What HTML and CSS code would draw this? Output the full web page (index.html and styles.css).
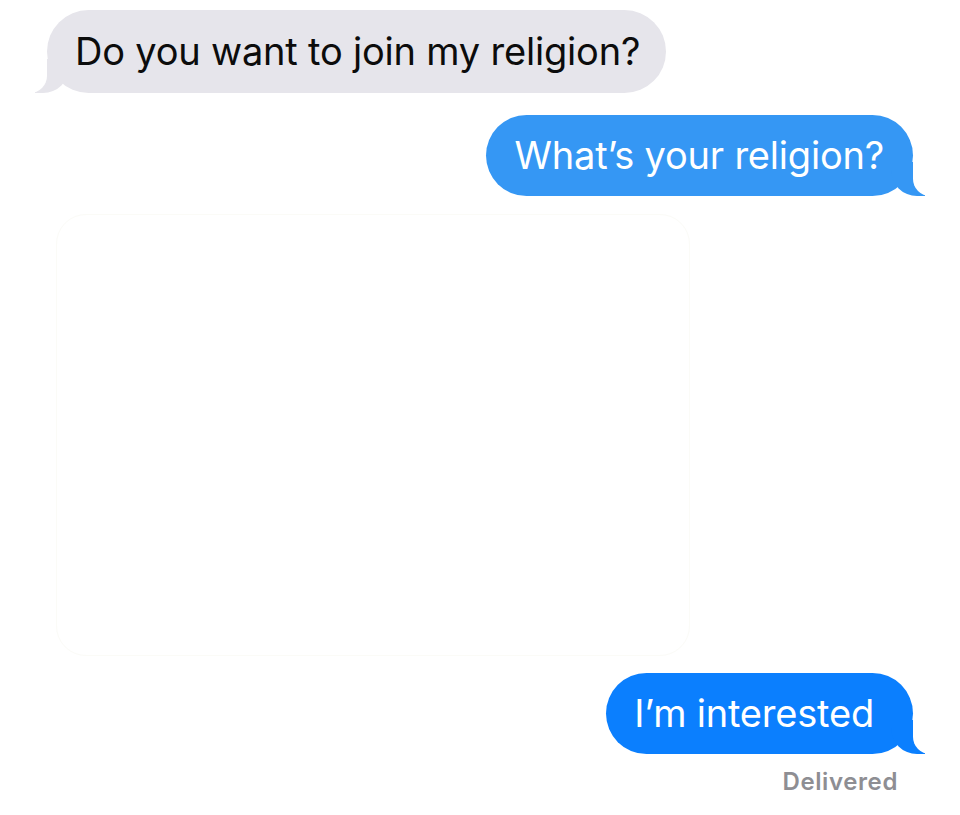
FILE: index.html
```html
<!DOCTYPE html>
<html>
<head>
<meta charset="utf-8">
<link rel="stylesheet" href="styles.css">
</head>
<body>
<main class="thread">
  <div class="row row-them">
    <div class="bubble them">Do you want to join my religion?</div>
  </div>
  <div class="row row-me">
    <div class="bubble me me-sms">What’s your religion?</div>
  </div>
  <div class="row row-them">
    <div class="photo"></div>
  </div>
  <div class="row row-me">
    <div class="bubble me me-imsg">I’m interested</div>
  </div>
  <div class="row row-me">
    <div class="status">Delivered</div>
  </div>
</main>
</body>
</html>
```
FILE: styles.css
```css
html, body {
  margin: 0;
  padding: 0;
  background: #ffffff;
}

.thread {
  width: 960px;
  height: 815px;
  box-sizing: border-box;
  padding-top: 10px;
  display: flex;
  flex-direction: column;
  font-family: Inter, "Noto Sans", Roboto, sans-serif;
}

.row {
  display: flex;
}

.row-them {
  justify-content: flex-start;
  padding-left: 47px;
}

.row-me {
  justify-content: flex-end;
  padding-right: 47px;
}

.bubble {
  position: relative;
  font-size: 38px;
  line-height: 45px;
  letter-spacing: -0.2px;
  border-radius: 42px;
  padding: 19px 26px 19px 28px;
  white-space: nowrap;
}

.them {
  background: #e6e5eb;
  color: #0c0c0c;
}

.me {
  color: #ffffff;
  padding-top: 18px;
  padding-bottom: 18px;
}

.me-sms {
  background: #3597f4;
  margin-top: 22px;
  padding-left: 29px;
  padding-right: 29px;
}

.me-imsg {
  background: #0b7ffe;
  margin-top: 17px;
  padding-left: 28px;
  padding-right: 39px;
}

/* tails */
.them::before {
  content: "";
  position: absolute;
  bottom: 0;
  left: -12px;
  width: 34px;
  height: 34px;
  background: #e6e5eb;
  border-bottom-right-radius: 26px;
}

.them::after {
  content: "";
  position: absolute;
  bottom: 0;
  left: -44px;
  width: 44px;
  height: 34px;
  background: #ffffff;
  border-bottom-right-radius: 17px;
}

.me::before {
  content: "";
  position: absolute;
  bottom: 0;
  right: -12px;
  width: 34px;
  height: 34px;
  border-bottom-left-radius: 26px;
}

.me-sms::before { background: #3597f4; }
.me-imsg::before { background: #0b7ffe; }

.me::after {
  content: "";
  position: absolute;
  bottom: 0;
  right: -44px;
  width: 44px;
  height: 34px;
  background: #ffffff;
  border-bottom-left-radius: 17px;
}

.photo {
  width: 632px;
  height: 440px;
  margin-top: 18px;
  margin-left: 9px;
  border-radius: 30px;
  border: 1px solid #fbfbf7;
  background: #ffffff;
}

.status {
  margin-top: 15px;
  margin-right: 15px;
  font-size: 24px;
  font-weight: 600;
  letter-spacing: 0.6px;
  color: #8e8e93;
  line-height: 26px;
}
```
